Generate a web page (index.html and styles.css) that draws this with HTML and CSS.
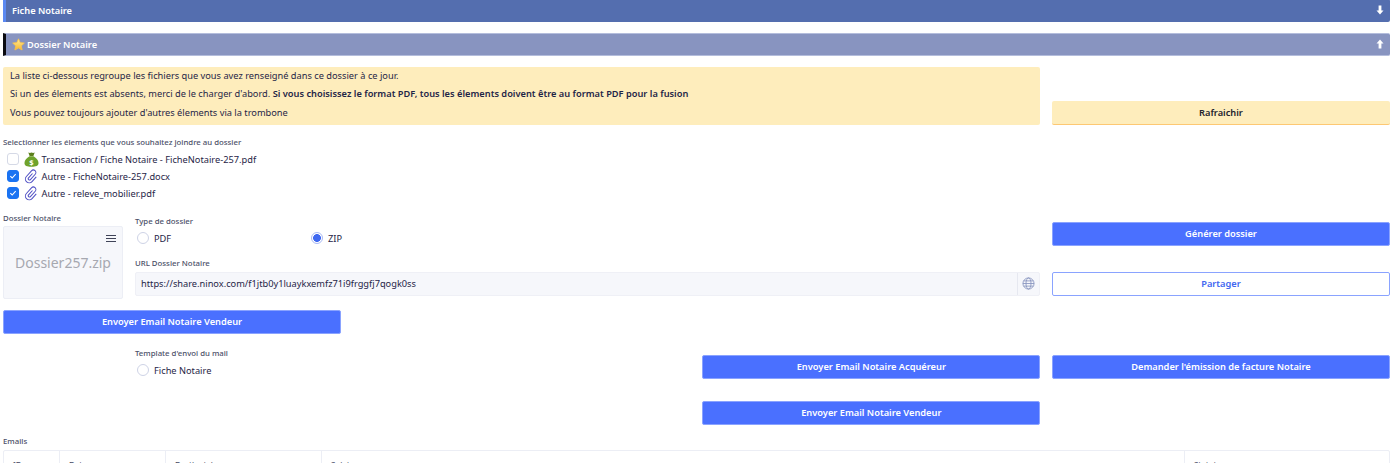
FILE: index.html
```html
<!DOCTYPE html>
<html lang="fr">
<head>
<meta charset="utf-8">
<title>Dossier Notaire</title>
<link rel="stylesheet" href="styles.css">
</head>
<body>
<main class="page">
  <header class="bar bar-main">
    <span class="bar-title">Fiche Notaire</span>
    <svg class="bar-arrow" viewBox="0 0 8 10"><path d="M2.600 0.500h2.800v5h2.100L4 9.500 0.500 5.500h2.100z"/></svg>
  </header>
  <header class="bar bar-sub">
    <span class="bar-title">
      <svg class="star" viewBox="0 0 24 24"><defs><linearGradient id="g" x1="0" y1="0" x2="0" y2="1"><stop offset="0" stop-color="#ffef9e"/><stop offset="1" stop-color="#f7b52a"/></linearGradient></defs><path fill="url(#g)" stroke="#f7c24a" stroke-width="1.500" stroke-linejoin="round" d="M12 1.500l3.200 7 7.600.9-5.600 5.200 1.500 7.600L12 18.400l-6.700 3.800 1.500-7.600L1.200 9.400l7.600-.9z"/></svg>
      Dossier Notaire
    </span>
    <svg class="bar-arrow" viewBox="0 0 8 10"><path d="M2.600 9.500h2.800v-5h2.100L4 .5.500 4.500h2.100z"/></svg>
  </header>

  <section class="grid-row notice-row">
    <div class="notice">
      <p>La liste ci-dessous regroupe les fichiers que vous avez renseigné dans ce dossier à ce jour.</p>
      <p>Si un des élements est absents, merci de le charger d'abord. <strong>Si vous choisissez le format PDF, tous les élements doivent être au format PDF pour la fusion</strong></p>
      <p>Vous pouvez toujours ajouter d'autres élements via la trombone</p>
    </div>
    <button class="btn btn-warn">Rafraichir</button>
  </section>

  <section class="files">
    <div class="label">Selectionner les élements que vous souhaitez joindre au dossier</div>
    <ul class="file-list">
      <li class="file">
        <span class="check"></span>
        <svg class="file-icon" viewBox="0 0 16 16"><path fill="#5c7f1c" d="M4.600 .6c1.200.7 2.200.7 3.400 0 1.200.7 2.200.7 3.400 0L10 4.200H6z"/><path fill="#6fa32c" d="M5.800 4.600h4.400c3 1.800 5.300 4.400 5.300 7 0 3-2.600 4-7.500 4s-7.500-1-7.500-4c0-2.600 2.300-5.200 5.300-7z"/><text x="8" y="13.500" class="bag-sign">$</text></svg>
        Transaction / Fiche Notaire - FicheNotaire-257.pdf
      </li>
      <li class="file">
        <span class="check checked"><svg viewBox="0 0 12 12"><path d="M2.800 6.200l2.200 2.200 4.200-4.600"/></svg></span>
        <svg class="file-icon clip" viewBox="0 0 16 16"><path transform="rotate(42 8 8) translate(.8 .4) scale(.9)" d="M6.500 5v7a1.500 1.500 0 0 0 3 0V3.500a3 3 0 0 0-6 0v9a4.500 4.500 0 0 0 9 0V5"/></svg>
        Autre - FicheNotaire-257.docx
      </li>
      <li class="file">
        <span class="check checked"><svg viewBox="0 0 12 12"><path d="M2.800 6.200l2.200 2.200 4.200-4.600"/></svg></span>
        <svg class="file-icon clip" viewBox="0 0 16 16"><path transform="rotate(42 8 8) translate(.8 .4) scale(.9)" d="M6.500 5v7a1.500 1.500 0 0 0 3 0V3.500a3 3 0 0 0-6 0v9a4.500 4.500 0 0 0 9 0V5"/></svg>
        Autre - releve_mobilier.pdf
      </li>
    </ul>
  </section>

  <section class="dossier">
    <div class="attachment">
      <div class="label">Dossier Notaire</div>
      <div class="preview">
        <span class="menu"><i></i><i></i><i></i></span>
        Dossier257.zip
      </div>
    </div>
    <div class="fields">
      <div class="label">Type de dossier</div>
      <div class="radios">
        <div class="radio-item"><span class="radio"></span>PDF</div>
        <div class="radio-item"><span class="radio on"></span>ZIP</div>
      </div>
      <div class="label url-label">URL Dossier Notaire</div>
      <div class="url-input">
        <span class="url-text">https://share.ninox.com/f1jtb0y1luaykxemfz71i9frggfj7qogk0ss</span>
        <span class="url-addon"><svg viewBox="0 0 14 14"><circle cx="7" cy="7" r="6"/><ellipse cx="7" cy="7" rx="2.700" ry="6"/><path d="M1 7h12M1.800 4.200h10.400M1.800 9.800h10.400"/></svg></span>
      </div>
    </div>
    <div class="actions">
      <button class="btn btn-primary">Générer dossier</button>
      <button class="btn btn-outline">Partager</button>
    </div>
  </section>

  <section class="grid-row send-row">
    <button class="btn btn-primary">Envoyer Email Notaire Vendeur</button>
  </section>

  <section class="grid-row template-row">
    <div class="template">
      <div class="label">Template d'envoi du mail</div>
      <div class="radio-item"><span class="radio"></span>Fiche Notaire</div>
    </div>
    <div class="template-actions">
      <button class="btn btn-primary">Envoyer Email Notaire Acquéreur</button>
      <button class="btn btn-primary">Envoyer Email Notaire Vendeur</button>
    </div>
    <button class="btn btn-primary">Demander l'émission de facture Notaire</button>
  </section>

  <section class="emails">
    <div class="label">Emails</div>
    <div class="table">
      <div class="cell">ID</div>
      <div class="cell">Date</div>
      <div class="cell">Destinataire</div>
      <div class="cell">Sujet</div>
      <div class="cell">Statut</div>
    </div>
  </section>
</main>
</body>
</html>
```

FILE: styles.css
```css
* { box-sizing: border-box; }
html, body {
  margin: 0;
  height: 463px;
  overflow: hidden;
  background: #fff;
}
body {
  font-family: "Noto Sans", "Open Sans", sans-serif;
  font-size: 9.250px;
  color: #1f2547;
}
.page {
  margin: 0 10px 0 3px;
  width: 1387px;
}
.bar {
  display: flex;
  align-items: center;
  justify-content: space-between;
  height: 22.500px;
  padding: 0 6px 0 6px;
  border-radius: 0 2px 2px 0;
  color: #fff;
  font-weight: 600;
}
.bar-main {
  margin-top: -1px;
  background: #546eaf;
  border-left: 3px solid #5a88f2;
}
.bar-sub {
  margin-top: 11.500px;
  background: #8894c0;
  border-left: 3px solid #0a0a10;
  border-top: 1px solid #b4bddc;
  border-bottom: 1px solid #b4bddc;
}
.bar-title {
  display: flex;
  align-items: center;
  gap: 2px;
}
.star { width: 13px; height: 13px; }
.bar-arrow { width: 8px; height: 10px; fill: #fff; }

.grid-row {
  display: grid;
  grid-template-columns: repeat(4, 338px);
  column-gap: 11.670px;
}
.notice-row {
  margin-top: 11px;
  align-items: end;
}
.notice {
  grid-column: 1 / 4;
  height: 58px;
  padding: 0 7px;
  background: #feedbc;
  border-radius: 2px;
}
.notice p {
  margin: 0;
  line-height: 18.700px;
  white-space: nowrap;
}
.notice strong { font-weight: 600; }

.btn {
  display: block;
  height: 24px;
  width: 100%;
  padding: 0;
  border: 1px solid #8aa3ff;
  border-radius: 2px;
  font: 600 9.250px "Noto Sans", "Open Sans", sans-serif;
}
.btn-primary { background: #4a70ff; color: #fff; }
.btn-outline { background: #fff; color: #4166f0; }
.btn-warn {
  padding-top: 1px;
  background: #feedbc;
  color: #22232c;
  border: 0;
  border-bottom: 1px solid #fdc873;
}

.label {
  font-size: 7.800px;
  line-height: 12px;
  color: #4c5068;
  font-weight: 500;
  white-space: nowrap;
}
.files { margin-top: 11px; }
.file-list {
  list-style: none;
  margin: 3px 0 0;
  padding: 0 0 0 3.500px;
}
.file {
  display: flex;
  align-items: center;
  height: 17px;
  white-space: nowrap;
}
.check {
  flex: none;
  display: flex;
  width: 12px;
  height: 12px;
  margin-right: 5px;
  border: 1px solid #d5d9e6;
  border-radius: 3px;
  background: #fff;
}
.check.checked { background: #1a73f2; border-color: #1a73f2; }
.check svg { width: 10px; height: 10px; fill: none; stroke: #fff; stroke-width: 1.300; }
.file-icon { flex: none; width: 15px; height: 15px; margin-right: 3px; }
.bag-sign { font-size: 8px; font-weight: 700; fill: #fff; text-anchor: middle; }
.clip { fill: none; stroke: #4f4fc4; stroke-width: 1.200; }

.dossier {
  display: grid;
  grid-template-columns: 120px 905px 338px;
  column-gap: 12px;
  margin-top: 10px;
}
.preview {
  position: relative;
  display: flex;
  align-items: center;
  justify-content: center;
  height: 73px;
  margin-top: 2px;
  background: #f6f7fb;
  border: 1px solid #eceef5;
  border-radius: 2px;
  font-size: 14px;
  color: #a6a8b0;
  white-space: nowrap;
}
.menu {
  position: absolute;
  top: 8px;
  right: 6px;
  display: flex;
  flex-direction: column;
  gap: 2px;
  width: 10px;
}
.menu i { display: block; height: 1px; background: #3f4358; }
.fields { padding-top: 3px; }
.radios {
  display: grid;
  grid-template-columns: 174px 174px;
  margin-top: 3px;
}
.radio-item {
  display: flex;
  align-items: center;
  height: 17px;
  padding-left: 2px;
  white-space: nowrap;
}
.radio {
  flex: none;
  width: 12px;
  height: 12px;
  margin-right: 5px;
  border: 1px solid #ced3e6;
  border-radius: 50%;
  background: #fff;
}
.radio.on {
  border: 1px solid #a9b9f5;
  background: radial-gradient(circle, #3f68f0 0 3.600px, #fff 4.200px);
}
.url-label { margin-top: 10px; }
.url-input {
  display: flex;
  align-items: center;
  justify-content: space-between;
  height: 24px;
  margin-top: 3px;
  background: #f6f7fb;
  border: 1px solid #eff0f6;
  border-radius: 2px;
}
.url-text { padding-left: 5px; white-space: nowrap; }
.url-addon {
  display: flex;
  align-items: center;
  justify-content: center;
  width: 22px;
  height: 100%;
  border-left: 1px solid #e6e8f0;
}
.url-addon svg {
  width: 13px;
  height: 13px;
  fill: none;
  stroke: #8492bd;
  stroke-width: .9;
}
.actions {
  display: flex;
  flex-direction: column;
  gap: 26px;
  padding-top: 10px;
}
.send-row { margin-top: 11px; }
.template-row { margin-top: 21px; align-items: start; }
.template {
  grid-column: 1 / 3;
  padding-left: 132px;
  margin-top: -8px;
}
.template .radio-item { margin-top: 3px; }
.template-actions {
  display: flex;
  flex-direction: column;
  gap: 22px;
}
.emails { margin-top: 10px; }
.table {
  display: grid;
  grid-template-columns: 55px 106px 156px 863px 1fr;
  height: 40px;
  margin-top: 3px;
  border: 1px solid #eceef5;
  border-radius: 2px;
}
.cell {
  padding: 8px 9px;
  border-left: 1px solid #eceef5;
  font-size: 7.800px;
  font-weight: 500;
  color: #4c5068;
}
.cell:first-child { border-left: 0; }
```
